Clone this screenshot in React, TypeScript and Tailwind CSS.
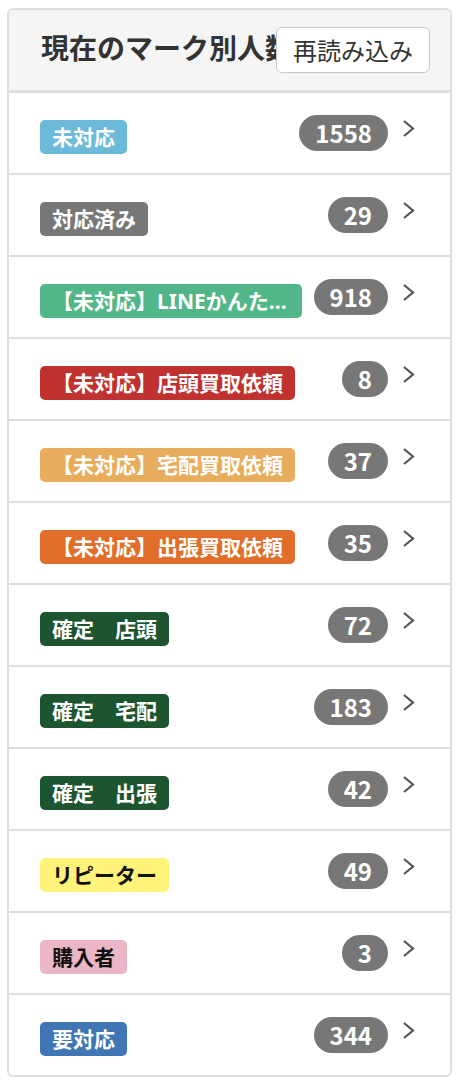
const marks = [
  { label: "未対応", count: 1558, cls: "bg-[#6bbad9] text-white" },
  { label: "対応済み", count: 29, cls: "bg-[#777777] text-white" },
  { label: "【未対応】LINEかんたん査定依頼", count: 918, cls: "bg-[#52b788] text-white" },
  { label: "【未対応】店頭買取依頼", count: 8, cls: "bg-[#c0322f] text-white" },
  { label: "【未対応】宅配買取依頼", count: 37, cls: "bg-[#e8ad5c] text-white" },
  { label: "【未対応】出張買取依頼", count: 35, cls: "bg-[#e06e2a] text-white" },
  { label: "確定　店頭", count: 72, cls: "bg-[#1e5531] text-white" },
  { label: "確定　宅配", count: 183, cls: "bg-[#1e5531] text-white" },
  { label: "確定　出張", count: 42, cls: "bg-[#1e5531] text-white" },
  { label: "リピーター", count: 49, cls: "bg-[#fff37a] text-[#111]" },
  { label: "購入者", count: 3, cls: "bg-[#ebb6c5] text-[#111]" },
  { label: "要対応", count: 344, cls: "bg-[#3f76b3] text-white" },
];

function Chevron() {
  return (
    <svg width="13" height="19" viewBox="0 0 13 19" className="ml-[14px] mb-[9px] shrink-0">
      <polyline points="2,2 11,9.5 2,17" fill="none" stroke="#555" strokeWidth="2.2" />
    </svg>
  );
}

export default function App() {
  return (
    <div className="min-h-screen bg-white pt-[8px] pl-[7px] font-['Noto_Sans_CJK_JP','Noto_Sans',sans-serif]">
      <section className="w-[445px] overflow-hidden rounded-[6px] border-2 border-[#dedede] bg-white">
        <header className="flex h-[83px] items-center border-b-[3px] border-[#dedede] bg-[#f5f5f5] pl-[32px] pr-[20px]">
          <h2 className="min-w-0 flex-1 overflow-hidden whitespace-nowrap pb-[6px] text-[28px] font-bold text-[#333]">
            現在のマーク別人数
          </h2>
          <button className="h-[46px] shrink-0 rounded-[6px] border-[1.5px] border-[#c8c8c8] bg-white px-[16px] text-[24px] leading-none text-[#333]">
            再読み込み
          </button>
        </header>
        <ul>
          {marks.map((m, i) => (
            <li
              key={m.label}
              className={`flex items-center pl-[31px] pr-[35px] ${i < marks.length - 1 ? "h-[82px] border-b-2 border-[#dedede]" : "h-[80px]"}`}
            >
              <span
                className={`mt-[7px] block h-[34px] max-w-[262px] truncate rounded-[5px] px-[12px] font-['Noto_Sans','Noto_Sans_CJK_JP',sans-serif] text-[21px] font-bold leading-[34px] ${m.cls}`}
              >
                {m.label}
              </span>
              <span className="flex-1" />
              <span className="h-[36px] shrink-0 rounded-full bg-[#777] px-[16px] text-[24px] font-bold leading-[36px] text-white">
                {m.count}
              </span>
              <Chevron />
            </li>
          ))}
        </ul>
      </section>
    </div>
  );
}
